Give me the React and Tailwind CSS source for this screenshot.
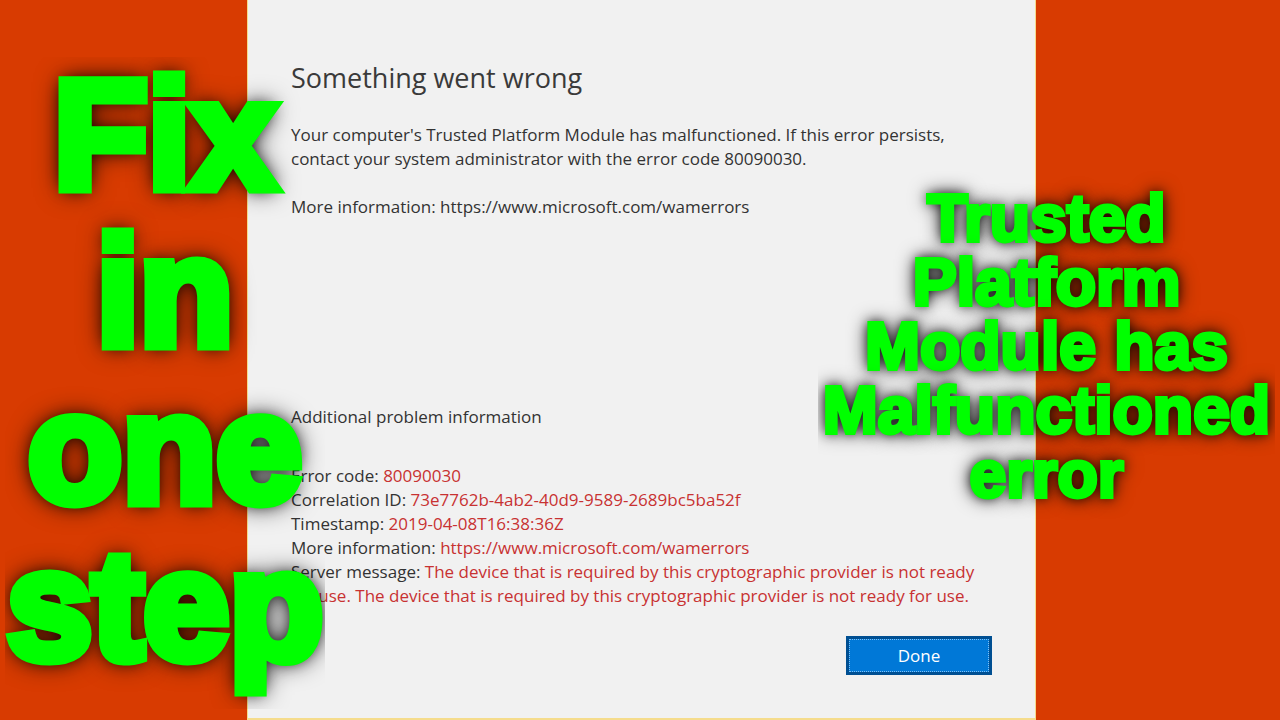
const MORE_INFO_URL = 'https://www.microsoft.com/wamerrors'

const details = [
  { label: 'Error code', value: '80090030' },
  { label: 'Correlation ID', value: '73e7762b-4ab2-40d9-9589-2689bc5ba52f' },
  { label: 'Timestamp', value: '2019-04-08T16:38:36Z' },
  { label: 'More information', value: MORE_INFO_URL, href: MORE_INFO_URL },
  {
    label: 'Server message',
    value:
      'The device that is required by this cryptographic provider is not ready for use. The device that is required by this cryptographic provider is not ready for use.',
  },
]

function Caption({ lines, className }) {
  return (
    <div
      className={`pointer-events-none absolute overflow-hidden text-center font-['Liberation_Sans',sans-serif] font-bold whitespace-nowrap text-[#00ff00] ${className}`}
    >
      {lines.map((line) => (
        <p key={line}>{line}</p>
      ))}
    </div>
  )
}

function ErrorDialog() {
  return (
    <main className="flex flex-col border-x border-b-2 border-[#f5dc8c] bg-[#f1f1f1] px-[43px] pt-[58px] pb-[43px] text-[17px] leading-6 text-[#333333]">
      <h1 className="text-[27px] leading-10 text-[#3a3a3a]">Something went wrong</h1>

      <p className="mt-[25px]">
        Your computer's Trusted Platform Module has malfunctioned. If this error persists, contact your
        system administrator with the error code 80090030.
      </p>
      <p className="mt-6">
        More information: <a href={MORE_INFO_URL}>{MORE_INFO_URL}</a>
      </p>

      <h2 className="mt-[186px]">Additional problem information</h2>
      <dl className="mt-[35px]">
        {details.map(({ label, value, href }) => (
          <div key={label}>
            <dt className="inline">{label}: </dt>
            <dd className="inline text-[#c83232]">{href ? <a href={href}>{value}</a> : value}</dd>
          </div>
        ))}
      </dl>

      <button
        type="button"
        className="mt-auto h-[39px] w-[146px] self-end border-[3px] border-[#004f92] bg-[#0078d7] text-white outline-1 -outline-offset-4 outline-dotted outline-[#7fc0f5]"
      >
        Done
      </button>
    </main>
  )
}

export default function App() {
  return (
    <div className="relative grid min-h-screen grid-cols-[247fr_789fr_244fr] overflow-hidden bg-[#d83b01] font-['Open_Sans',sans-serif]">
      <div />
      <ErrorDialog />
      <div />

      <Caption
        lines={['Fix', 'in', 'one', 'step']}
        className="top-[57px] left-[5px] w-[320px] pb-6 text-[154px] leading-[157px] [-webkit-text-stroke:11px_#00ff00] [text-shadow:0_0_16px_#000000,0_0_28px_#000000]"
      />
      <Caption
        lines={['Trusted', 'Platform', 'Module has', 'Malfunctioned', 'error']}
        className="top-[166px] right-[5px] w-[457px] py-5 text-[66px] leading-[64px] [-webkit-text-stroke:4px_#00ff00] [text-shadow:0_0_12px_#000000,0_0_20px_#000000]"
      />
    </div>
  )
}
